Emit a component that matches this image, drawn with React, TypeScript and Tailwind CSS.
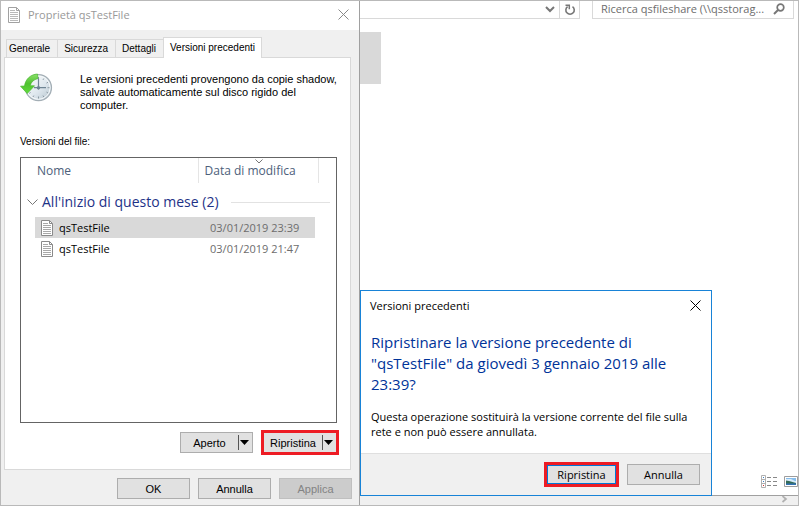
import type { ReactNode } from "react";

const DIALOG_FONT = "font-['Liberation_Sans',Arial,sans-serif]";
const SHELL_FONT = "font-['Open_Sans','Noto_Sans',sans-serif]";

function FileIcon({ className = "" }: { className?: string }) {
  return (
    <svg className={className} width="12" height="16" viewBox="0 0 12 16" fill="none" aria-hidden="true">
      <path d="M.5.5h8l3 3v12H.5z" fill="#fff" stroke="#8a8a8a" />
      <path d="M8.500 .5V3.500h3" stroke="#8a8a8a" />
      <path d="M2 3.500h5M2 5.500h8M2 7.500h8M2 9.500h8M2 11.500h8M2 13.500h8" stroke="#a8a8a8" />
    </svg>
  );
}

function CloseIcon() {
  return (
    <svg width="11" height="11" viewBox="0 0 11 11" fill="none" stroke="currentColor" aria-hidden="true">
      <path d="M.5.5l10 10M10.5.5l-10 10" />
    </svg>
  );
}

function HistoryIcon() {
  return (
    <svg width="33" height="30" viewBox="0 0 33 30" className="shrink-0" aria-hidden="true">
      <defs>
        <linearGradient id="face" x1="0" y1="0" x2="1" y2="1">
          <stop offset="0" stopColor="#ffffff" />
          <stop offset="0.55" stopColor="#dfe8ee" />
          <stop offset="1" stopColor="#b4c3cd" />
        </linearGradient>
        <linearGradient id="arrow" x1="0" y1="0" x2="0" y2="1">
          <stop offset="0" stopColor="#8be06a" />
          <stop offset="0.5" stopColor="#4fc22f" />
          <stop offset="1" stopColor="#62dc3c" />
        </linearGradient>
      </defs>
      <circle cx="18.5" cy="14.7" r="13" fill="url(#face)" stroke="#a3aeb5" strokeWidth="1.2" />
      <circle cx="18.5" cy="14.7" r="11.6" fill="none" stroke="#f6f9fa" />
      <path
        d="M18.5 4v2M18.5 23.5v2M27.5 14.7h2M23.8 5.5l-.8 1.4M28 9.2l-1.5.9M28 20l-1.5-.9M23.8 24l-.8-1.4M13 24l.8-1.4M9.2 20.4l1.4-.9"
        stroke="#8d9aa3"
      />
      <path d="M18.5 5.5v11M14 14.7h12" stroke="#6f8594" strokeWidth="1.2" fill="none" />
      <circle cx="18.5" cy="14.7" r="1.7" fill="#6c8493" />
      <path
        d="M17.5 1C10.5 1.500 5.500 6 4.500 13L.5 13.200 7.200 20.500 14.500 12.800 10.300 12.700C11 9 13.500 6.700 18 5.500z"
        fill="url(#arrow)"
        stroke="#4ab832"
        strokeWidth=".7"
      />
    </svg>
  );
}

function Tab({ children, selected = false }: { children: ReactNode; selected?: boolean }) {
  return (
    <button
      type="button"
      role="tab"
      aria-selected={selected}
      className={
        selected
          ? "relative -mb-px h-[21px] border border-b-0 border-[#d9d9d9] bg-white px-1.5 leading-5"
          : "h-[18px] border border-r-0 border-b-0 border-[#d9d9d9] bg-[#f0f0f0] pr-[7px] pl-1.5 leading-4 first:pl-0.5"
      }
    >
      {children}
    </button>
  );
}

function SplitButton({ label, highlighted = false }: { label: string; highlighted?: boolean }) {
  return (
    <div
      className={
        highlighted
          ? "flex h-[25px] w-[78px] items-center border-3 border-[#ed1c24] bg-[#e1e1e1]"
          : "flex h-[21px] w-[73px] items-center border border-[#adadad] bg-[#e1e1e1]"
      }
    >
      <button type="button" className="flex-1 text-center text-[11px] leading-4">
        {label}
      </button>
      <button
        type="button"
        aria-label={`${label}: altre opzioni`}
        className="flex h-[15px] w-3.5 items-center border-l border-[#555] pl-px"
      >
        <svg width="9" height="5" viewBox="0 0 9 5" aria-hidden="true">
          <path d="M0 0h9L4.500 5z" fill="#000" />
        </svg>
      </button>
    </div>
  );
}

function FileRow({ name, date, selected = false }: { name: string; date: string; selected?: boolean }) {
  const fill = selected ? "bg-[#d9d9d9]" : "";
  return (
    <tr className="h-[21px] text-[11px]">
      <td />
      <td className={`pl-1.5 ${fill}`}>
        <span className="flex items-center gap-1.5">
          <FileIcon />
          {name}
        </span>
      </td>
      <td className={`pl-3 whitespace-nowrap text-[#6d6d6d] ${fill}`}>{date}</td>
      <td colSpan={2} />
    </tr>
  );
}

function PropertiesDialog() {
  const footer = "h-[21px] w-[73px] border text-[11px] leading-4";
  return (
    <section
      aria-label="Proprietà qsTestFile"
      className={`flex w-[359px] shrink-0 flex-col border-r border-[#a0a0a0] bg-[#f0f0f0] text-black ${DIALOG_FONT}`}
    >
      <header className="flex h-[29px] items-center bg-white pr-2.5 pb-0.5 pl-[7px] text-[#999]">
        <FileIcon className="opacity-80" />
        <h1 className={`ml-2 flex-1 text-[11px] leading-4 ${SHELL_FONT}`}>Proprietà qsTestFile</h1>
        <button type="button" aria-label="Chiudi" className="text-[#888]">
          <CloseIcon />
        </button>
      </header>

      <div className="px-[3px] pt-[7px]">
        <div role="tablist" className="flex items-end pl-0.5 text-[10px]">
          <Tab>Generale</Tab>
          <Tab>Sicurezza</Tab>
          <Tab>Dettagli</Tab>
          <Tab selected>Versioni precedenti</Tab>
        </div>

        <div className="mr-[5px] border border-[#d9d9d9] bg-white pt-[15px] pr-[13px] pb-3.5 pl-[15px]">
          <div className="flex h-[39px]">
            <HistoryIcon />
            <p className="ml-[27px] flex-1 text-[11px] leading-[13px] whitespace-nowrap">
              Le versioni precedenti provengono da copie shadow,
              <br />
              salvate automaticamente sul disco rigido del
              <br />
              computer.
            </p>
          </div>
          <h2 className="mt-[23px] text-[10px] leading-[13px]">Versioni del file:</h2>

          <div className={`mt-[9px] h-[266px] border border-[#646464] ${SHELL_FONT}`}>
            <table className="w-full table-fixed border-collapse text-left text-xs leading-4">
              <colgroup>
                <col className="w-3.5" />
                <col className="w-[163px]" />
                <col className="w-[117px]" />
                <col className="w-[3px]" />
                <col />
              </colgroup>
              <thead>
                <tr className="h-[25px] text-[#4c607a]">
                  <th colSpan={2} className="border-r border-[#e5e5e5] pl-4 font-normal">
                    Nome
                  </th>
                  <th colSpan={2} className="relative border-r border-[#e5e5e5] pl-1.5 font-normal">
                    Data di modifica
                    <svg className="absolute top-px left-14" width="8" height="5" viewBox="0 0 8 5" fill="none" stroke="#777" aria-hidden="true">
                      <path d="M.5.5L4 4 7.500.5" />
                    </svg>
                  </th>
                  <th />
                </tr>
              </thead>
              <tbody>
                <tr className="h-[34px]">
                  <th colSpan={5} className="pt-1 pr-1.5 pl-1.5 font-normal">
                    <div className="flex items-center text-sm leading-5 text-[#1e3287]">
                      <svg width="11" height="7" viewBox="0 0 11 7" fill="none" stroke="#777" aria-hidden="true">
                        <path d="M.5.5l5 5 5-5" />
                      </svg>
                      <span className="ml-1">All'inizio di questo mese (2)</span>
                      <span className="ml-3 h-px flex-1 bg-[#e2e2e2]" />
                    </div>
                  </th>
                </tr>
                <FileRow name="qsTestFile" date="03/01/2019 23:39" selected />
                <FileRow name="qsTestFile" date="03/01/2019 21:47" />
              </tbody>
            </table>
          </div>

          <div className="mt-[7px] -mr-0.5 flex items-center justify-end gap-2">
            <SplitButton label="Aperto" />
            <SplitButton label="Ripristina" highlighted />
          </div>
        </div>
      </div>

      <footer className="flex justify-end gap-2 px-[7px] pt-2 pb-1.5">
        <button type="button" className={`${footer} border-[#adadad] bg-[#e1e1e1]`}>
          OK
        </button>
        <button type="button" className={`${footer} border-[#adadad] bg-[#e1e1e1]`}>
          Annulla
        </button>
        <button type="button" disabled className={`${footer} border-[#bfbfbf] bg-[#cccccc] text-[#838383]`}>
          Applica
        </button>
      </footer>
    </section>
  );
}

function ConfirmDialog() {
  return (
    <section
      role="dialog"
      aria-labelledby="confirm-title"
      className="absolute bottom-[9px] left-0 w-[352px] border border-[#1883d7] bg-white text-[11px] text-black"
    >
      <header className="flex h-[29px] items-center pr-2.5 pl-[9px]">
        <h2 id="confirm-title" className="flex-1 leading-4">
          Versioni precedenti
        </h2>
        <button type="button" aria-label="Chiudi">
          <CloseIcon />
        </button>
      </header>
      <div className="h-[134px] border-b border-[#dfdfdf] px-2.5 pt-3">
        <p className="text-[15px] leading-[21px] text-[#003399]">
          Ripristinare la versione precedente di
          <br />
          "qsTestFile" da giovedì 3 gennaio 2019 alle
          <br />
          23:39?
        </p>
        <p className="mt-3.5 leading-[15px]">
          Questa operazione sostituirà la versione corrente del file sulla
          <br />
          rete e non può essere annullata.
        </p>
      </div>
      <footer className="flex h-[41px] items-center justify-end gap-2 bg-[#f0f0f0] pr-[11px]">
        <div className="border-3 border-[#ed1c24]">
          <button type="button" className="block h-[19px] w-[69px] border border-[#0078d7] bg-[#e1e1e1] leading-4">
            Ripristina
          </button>
        </div>
        <button type="button" className="h-[21px] w-[73px] border border-[#adadad] bg-[#e1e1e1] leading-4">
          Annulla
        </button>
      </footer>
    </section>
  );
}

function Explorer() {
  return (
    <main className={`relative flex min-w-0 flex-1 flex-col bg-white text-[11px] ${SHELL_FONT}`}>
      <div className="flex h-[18px] gap-3 pr-1 text-[#6d6d6d]">
        <div className="flex flex-1 justify-end border-r border-b border-[#d9d9d9]">
          <button type="button" aria-label="Posizioni precedenti" className="flex w-[19px] items-center justify-center">
            <svg width="10" height="7" viewBox="0 0 10 7" fill="none" stroke="#777" strokeWidth="2" aria-hidden="true">
              <path d="M1 1l4 4 4-4" />
            </svg>
          </button>
          <button
            type="button"
            aria-label="Aggiorna"
            className="flex w-5 items-center justify-center border-l border-[#d9d9d9]"
          >
            <svg width="12" height="12" viewBox="0 0 12 12" fill="none" stroke="#777" strokeWidth="1.6" aria-hidden="true">
              <path d="M8.500 2.600A4.200 4.200 0 1 1 3.600 2.600" />
              <path d="M1.500 1.200h3.800v4" strokeWidth="1.500" />
            </svg>
          </button>
        </div>
        <form role="search" className="flex w-[202px] items-center border-x border-b border-[#d9d9d9] px-2 pb-0.5">
          <input
            type="text"
            aria-label="Cerca nella cartella"
            placeholder="Ricerca qsfileshare (\\qsstorag..."
            className="min-w-0 flex-1 leading-4 outline-none placeholder:text-[#6d6d6d]"
          />
          <svg width="12" height="12" viewBox="0 0 12 12" fill="none" stroke="#777" aria-hidden="true">
            <circle cx="7.500" cy="4.500" r="3.300" strokeWidth="1.700" />
            <path d="M5 7L1 11" strokeWidth="2" />
          </svg>
        </form>
      </div>

      <div className="flex-1 pt-[13px]">
        <div className="h-[52px] w-[21px] bg-[#d9d9d9]" />
      </div>

      <div className="flex h-5 items-start justify-end gap-1.5">
        <button type="button" aria-label="Dettagli">
          <svg width="17" height="13" viewBox="0 0 17 13" fill="none" aria-hidden="true">
            <path d="M.5.5h4v12h-4zM.5 4.500h4M.5 8.500h4" stroke="#b0b0b0" />
            <path d="M2 2.500h1M2 6.500h1" stroke="#3d7fc4" />
            <path d="M2 10.500h1" stroke="#d03030" />
            <path d="M6 2.500h4M12 2.500h4M6 6.500h4M12 6.500h4M6 10.500h4M12 10.500h4" stroke="#888" />
          </svg>
        </button>
        <button type="button" aria-label="Icone grandi">
          <svg width="14" height="13" viewBox="0 0 14 13" aria-hidden="true">
            <path d="M.5 1.500h13v10H.5z" fill="#fff" stroke="#9d9d9d" />
            <path d="M2 3h10v7H2z" fill="#86bdec" />
            <path d="M2 4h5l4 2h1v2H2z" fill="#d6ebfa" />
            <path d="M2 5.500l3 .5 7 2V9H2z" fill="#356b57" />
            <path d="M2 8.500h10V10H2z" fill="#3372b4" />
          </svg>
        </button>
      </div>
      <div className="flex h-2.5 justify-end border-t border-[#a0a0a0] bg-[#f0f0f0] pr-2.5">
        <svg width="7" height="7" viewBox="0 0 7 7" fill="none" stroke="#b0b0b0" strokeWidth="1.700" aria-hidden="true">
          <path d="M1.500 0L5 3 1.500 6" />
        </svg>
      </div>

      <ConfirmDialog />
    </main>
  );
}

export default function App() {
  return (
    <div className="flex w-full border border-[#b9b9b9]">
      <PropertiesDialog />
      <Explorer />
    </div>
  );
}
